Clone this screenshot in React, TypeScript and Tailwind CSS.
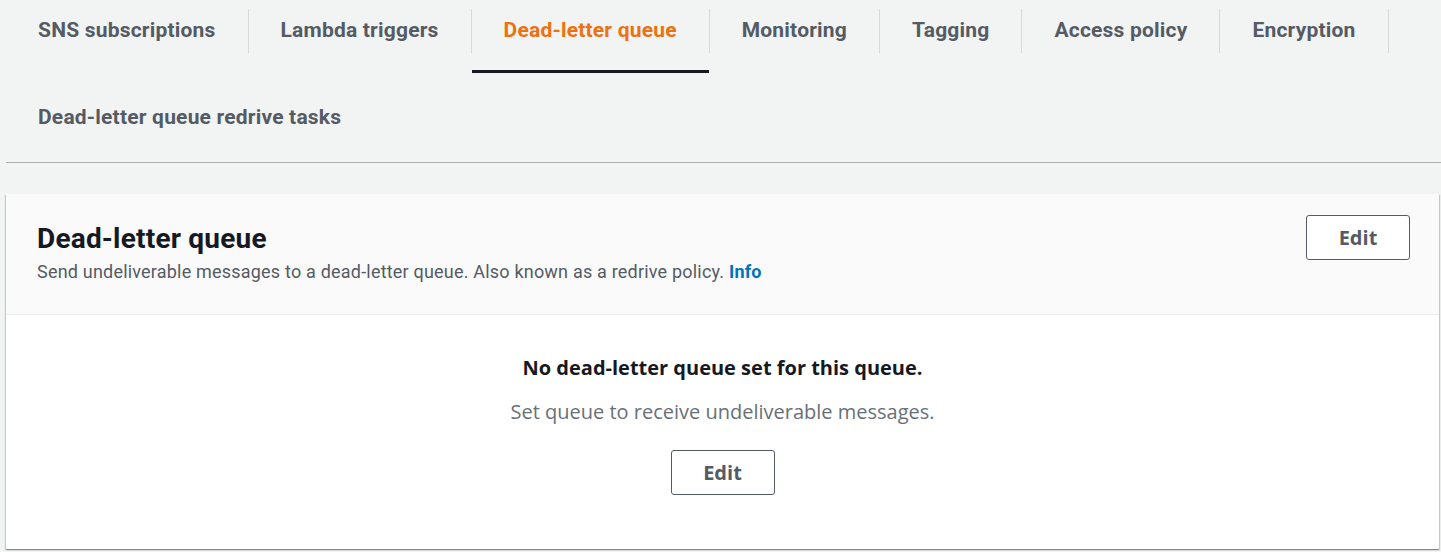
import React from "react";

const tabs = [
  "SNS subscriptions",
  "Lambda triggers",
  "Dead-letter queue",
  "Monitoring",
  "Tagging",
  "Access policy",
  "Encryption",
  "Dead-letter queue redrive tasks",
];

const active = "Dead-letter queue";

const EditButton = () => (
  <button className="h-[45px] w-[104px] rounded-[3px] border border-[#545b64] bg-white text-[20px] font-bold text-[#545b64] [font-family:'Open_Sans',sans-serif]">
    Edit
  </button>
);

export default function App() {
  return (
    <div className="h-[552px] w-full overflow-hidden bg-[#f2f3f3] [font-family:Roboto,'Liberation_Sans',sans-serif]">
      <div className="ml-[6px] flex flex-wrap gap-y-[13px] border-b border-[#aeb1b2] pb-[1px]">
        {tabs.map((t, i) => {
          const isActive = t === active;
          const last = i === tabs.length - 1;
          return (
            <div key={t} className="flex h-[74px] flex-col">
              <div
                className={`mt-[9px] flex h-[44px] items-center px-[32px] text-[21px] font-bold tracking-[0.2px] ${
                  last ? "" : "border-r border-[#d5dbdb]"
                } ${isActive ? "text-[#ec7211]" : "text-[#545b64]"}`}
              >
                {t}
              </div>
              <div
                className={`mr-[1px] mt-[17px] h-[3px] ${isActive ? "bg-[#16191f]" : "bg-transparent"}`}
              />
            </div>
          );
        })}
      </div>

      <div className="ml-[6px] mr-[2px] mt-[31px] bg-white shadow-[0_1px_1px_0_rgba(0,28,36,0.3),1px_1px_1px_0_rgba(0,28,36,0.15),-1px_1px_1px_0_rgba(0,28,36,0.15)]">
        <div className="flex items-start justify-between border-b border-[#eaeded] bg-[#fafafa] pb-[30px] pl-[31px] pr-[29px] pt-[21px]">
          <div className="pt-[6px]">
            <h2 className="text-[28px] font-bold leading-[36px] tracking-[0.2px] text-[#16191f]">Dead-letter queue</h2>
            <p className="mt-[3px] text-[18px] leading-[24px] tracking-[0.2px] text-[#545b64]">
              Send undeliverable messages to a dead-letter queue. Also known as a redrive policy.{" "}
              <a className="font-bold text-[#0073bb]">Info</a>
            </p>
          </div>
          <EditButton />
        </div>

        <div className="flex h-[234px] flex-col items-center pt-[39px] [font-family:'Open_Sans',sans-serif]">
          <p className="text-[20px] font-bold leading-[28px] text-[#16191f]">
            No dead-letter queue set for this queue.
          </p>
          <p className="mt-[16px] text-[20px] leading-[28px] text-[#687078]">
            Set queue to receive undeliverable messages.
          </p>
          <div className="mt-[24px]">
            <EditButton />
          </div>
        </div>
      </div>
    </div>
  );
}
